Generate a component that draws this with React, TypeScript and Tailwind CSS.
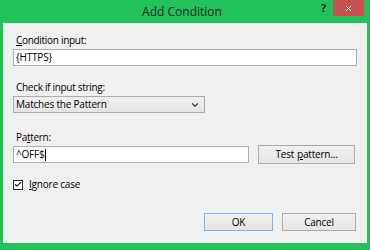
import { Check, ChevronDown, X } from "lucide-react";

const font = { fontFamily: '"Open Sans", "Noto Sans", sans-serif' };

function Label({ pre, u, post }: { pre: string; u: string; post: string }) {
  return (
    <div className="pl-[3px] text-[10px] leading-[13px] tracking-[-0.3px] text-black">
      {pre}
      <span className="underline underline-offset-1">{u}</span>
      {post}
    </div>
  );
}

export default function App() {
  return (
    <div
      className="flex flex-col w-[370px] h-[250px] bg-[#22c15c] text-black"
      style={font}
    >
      <div className="flex h-[23px] shrink-0">
        <div className="flex-1" />
        <div className="pt-[4px] text-[12px] leading-[16px] text-[#222]">
          Add Condition
        </div>
        <div className="flex flex-1 justify-end items-start pr-[6px]">
          <div className="mt-[1px] mr-[4px] w-[8px] text-[11px] font-bold leading-[14px] text-[#222]">
            ?
          </div>
          <div className="flex items-center justify-center w-[31px] h-[16px] bg-[#c75050]">
            <X size={9} strokeWidth={2.5} className="text-white" />
          </div>
        </div>
      </div>

      <div className="flex flex-col mx-[3px] h-[220px] bg-[#f0f0f0] px-[10px] pt-[11px] tracking-[-0.2px]">
        <Label pre="" u="C" post="ondition input:" />
        <div className="mt-[2px] h-[17px] border border-[#abadb3] bg-white px-[2px] text-[10px] leading-[15px]">
          {"{HTTPS}"}
        </div>

        <div className="mt-[15px]">
          <Label pre="Check if input string:" u="" post="" />
        </div>
        <div className="mt-[2px] flex items-center justify-between w-[192px] h-[17px] border border-[#acacac] bg-gradient-to-b from-[#f0f0f0] to-[#e5e5e5] px-[2px] text-[10px] leading-[15px]">
          <span>Matches the Pattern</span>
          <ChevronDown size={10} strokeWidth={3} className="mr-[2px] text-[#444]" />
        </div>

        <div className="mt-[18px]">
          <Label pre="Pa" u="t" post="tern:" />
        </div>
        <div className="mt-[1px] flex items-center gap-[9px]">
          <div className="flex items-center w-[236px] h-[17px] border border-[#abadb3] bg-white px-[2px] text-[10px] leading-[15px]">
            ^OFF$
            <span className="w-px h-[12px] bg-black" />
          </div>
          <div className="flex items-center justify-center w-[97px] h-[19px] border border-[#acacac] bg-gradient-to-b from-[#f0f0f0] to-[#e5e5e5] text-[10px]">
            Test <span className="ml-[3px] underline underline-offset-1">p</span>attern...
          </div>
        </div>

        <div className="mt-[14px] flex items-center gap-[6px]">
          <div className="flex items-center justify-center w-[10px] h-[10px] border border-[#333] bg-white">
            <Check size={9} strokeWidth={3.5} className="text-[#222]" />
          </div>
          <div className="text-[10px] leading-[13px]">
            <span className="underline underline-offset-1">I</span>gnore case
          </div>
        </div>

        <div className="mt-[22px] flex justify-end gap-[9px] pr-[1px]">
          <div className="flex items-center justify-center w-[69px] h-[18px] border border-[#7eb4ea] bg-gradient-to-b from-[#f0f0f0] to-[#e5e5e5] text-[10px]">
            OK
          </div>
          <div className="flex items-center justify-center w-[74px] h-[18px] border border-[#acacac] bg-gradient-to-b from-[#f0f0f0] to-[#e5e5e5] text-[10px]">
            Cancel
          </div>
        </div>
      </div>
    </div>
  );
}
